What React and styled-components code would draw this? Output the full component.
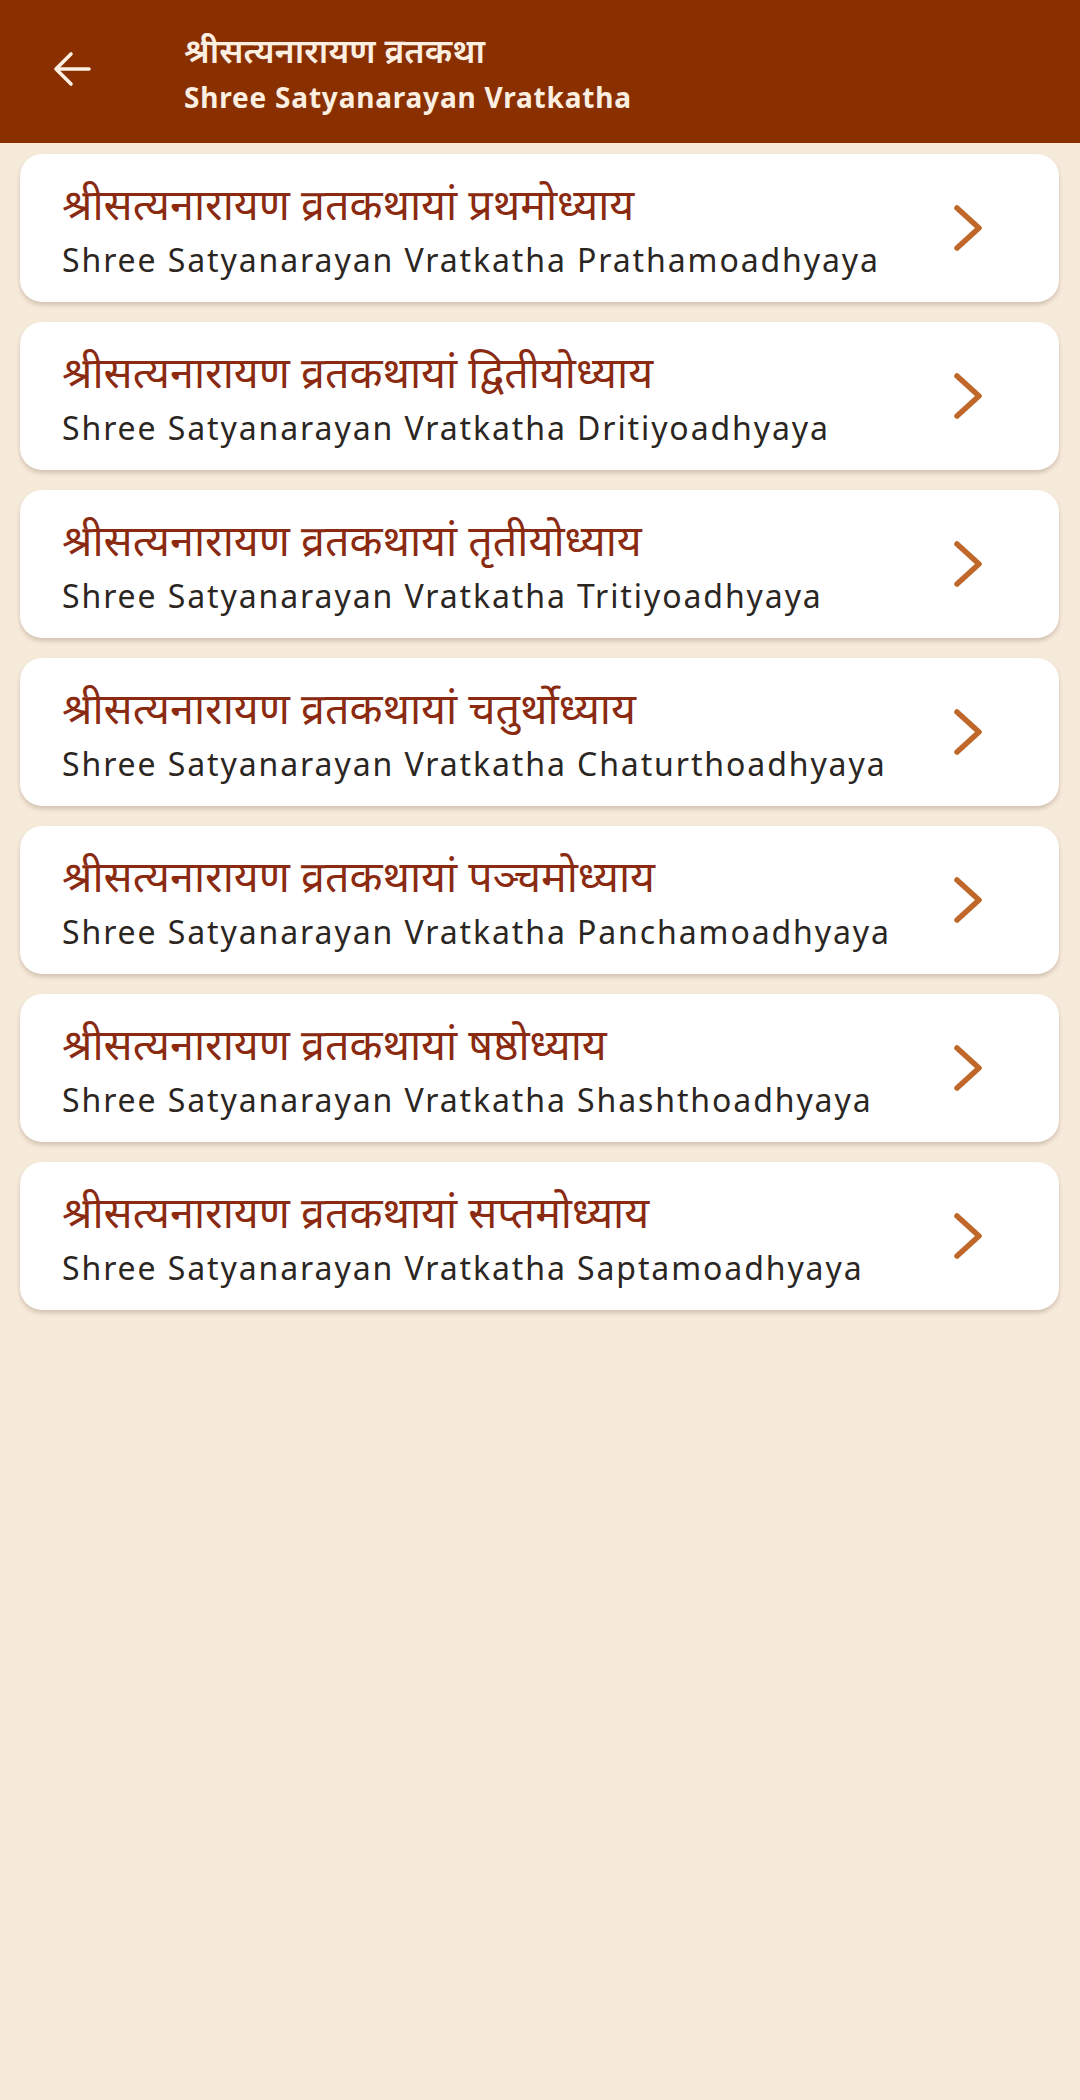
import React from 'react';
import styled, { createGlobalStyle } from 'styled-components';

const chapters = [
  { hi: 'श्रीसत्यनारायण व्रतकथायां प्रथमोध्याय', en: 'Shree Satyanarayan Vratkatha Prathamoadhyaya' },
  { hi: 'श्रीसत्यनारायण व्रतकथायां द्वितीयोध्याय', en: 'Shree Satyanarayan Vratkatha Dritiyoadhyaya' },
  { hi: 'श्रीसत्यनारायण व्रतकथायां तृतीयोध्याय', en: 'Shree Satyanarayan Vratkatha Tritiyoadhyaya' },
  { hi: 'श्रीसत्यनारायण व्रतकथायां चतुर्थोध्याय', en: 'Shree Satyanarayan Vratkatha Chaturthoadhyaya' },
  { hi: 'श्रीसत्यनारायण व्रतकथायां पञ्चमोध्याय', en: 'Shree Satyanarayan Vratkatha Panchamoadhyaya' },
  { hi: 'श्रीसत्यनारायण व्रतकथायां षष्ठोध्याय', en: 'Shree Satyanarayan Vratkatha Shashthoadhyaya' },
  { hi: 'श्रीसत्यनारायण व्रतकथायां सप्तमोध्याय', en: 'Shree Satyanarayan Vratkatha Saptamoadhyaya' },
];

function App() {
  return (
    <>
      <GlobalStyle />
      <Page>
        <TopBar>
          <BackButton aria-label='back'>
            <svg width='40' height='40' viewBox='0 0 40 40' fill='none'>
              <path
                d='M37 20H4M19 5L4 20l15 15'
                stroke='#fbefe2'
                strokeWidth='3.6'
                strokeLinecap='round'
                strokeLinejoin='round'
              />
            </svg>
          </BackButton>
          <TitleBlock>
            <TitleHi>श्रीसत्यनारायण व्रतकथा</TitleHi>
            <TitleEn>Shree Satyanarayan Vratkatha</TitleEn>
          </TitleBlock>
        </TopBar>
        <List>
          {chapters.map((c) => (
            <Card key={c.en}>
              <CardText>
                <CardHi>{c.hi}</CardHi>
                <CardEn>{c.en}</CardEn>
              </CardText>
              <Chevron viewBox='0 0 30 48' fill='none'>
                <path
                  d='M4 4l22 20L4 44'
                  stroke='#c0672a'
                  strokeWidth='5.5'
                  strokeLinecap='round'
                  strokeLinejoin='round'
                />
              </Chevron>
            </Card>
          ))}
        </List>
      </Page>
    </>
  );
}

const GlobalStyle = createGlobalStyle`
  html, body {
    margin: 0;
    padding: 0;
    background: #f6eadb;
  }
  body {
    font-family: "Noto Sans", sans-serif;
  }
`;

const Page = styled.div`
  min-height: 2100px;
  background: #f6eadb;
`;

const TopBar = styled.header`
  display: flex;
  align-items: center;
  height: 143px;
  background: #8a3000;
  padding-left: 52px;
  box-sizing: border-box;
`;

const BackButton = styled.button`
  display: flex;
  align-items: center;
  justify-content: center;
  width: 40px;
  height: 40px;
  padding: 0;
  margin: 0 92px 6px 0;
  background: transparent;
  border: none;
`;

const TitleBlock = styled.div`
  display: flex;
  flex-direction: column;
  gap: 4px;
  color: #fbefe2;
  margin-top: 6px;
`;

const TitleHi = styled.div`
  font-family: "Noto Sans Devanagari", "Noto Sans", sans-serif;
  font-size: 34px;
  font-weight: 600;
  line-height: 40px;
`;

const TitleEn = styled.div`
  font-family: "Noto Sans", sans-serif;
  font-size: 28px;
  font-weight: 700;
  line-height: 36px;
  letter-spacing: 0.8px;
`;

const List = styled.div`
  display: flex;
  flex-direction: column;
  gap: 20px;
  padding: 11px 21px 0 20px;
`;

const Card = styled.div`
  display: flex;
  align-items: center;
  justify-content: space-between;
  height: 148px;
  box-sizing: border-box;
  padding: 0 76px 0 42px;
  background: #ffffff;
  border-radius: 22px;
  box-shadow: 0 3px 4px rgba(90, 60, 30, 0.22);
`;

const CardText = styled.div`
  display: flex;
  flex-direction: column;
  gap: 4px;
  margin-top: 7px;
`;

const CardHi = styled.div`
  font-family: "Noto Sans Devanagari", "Noto Sans", sans-serif;
  font-size: 43px;
  line-height: 52px;
  color: #8a2a10;
`;

const CardEn = styled.div`
  font-family: "Noto Sans", sans-serif;
  font-size: 32px;
  line-height: 40px;
  letter-spacing: 1.9px;
  color: #2b2622;
`;

const Chevron = styled.svg`
  width: 30px;
  height: 48px;
  flex-shrink: 0;
`;

export default App;
